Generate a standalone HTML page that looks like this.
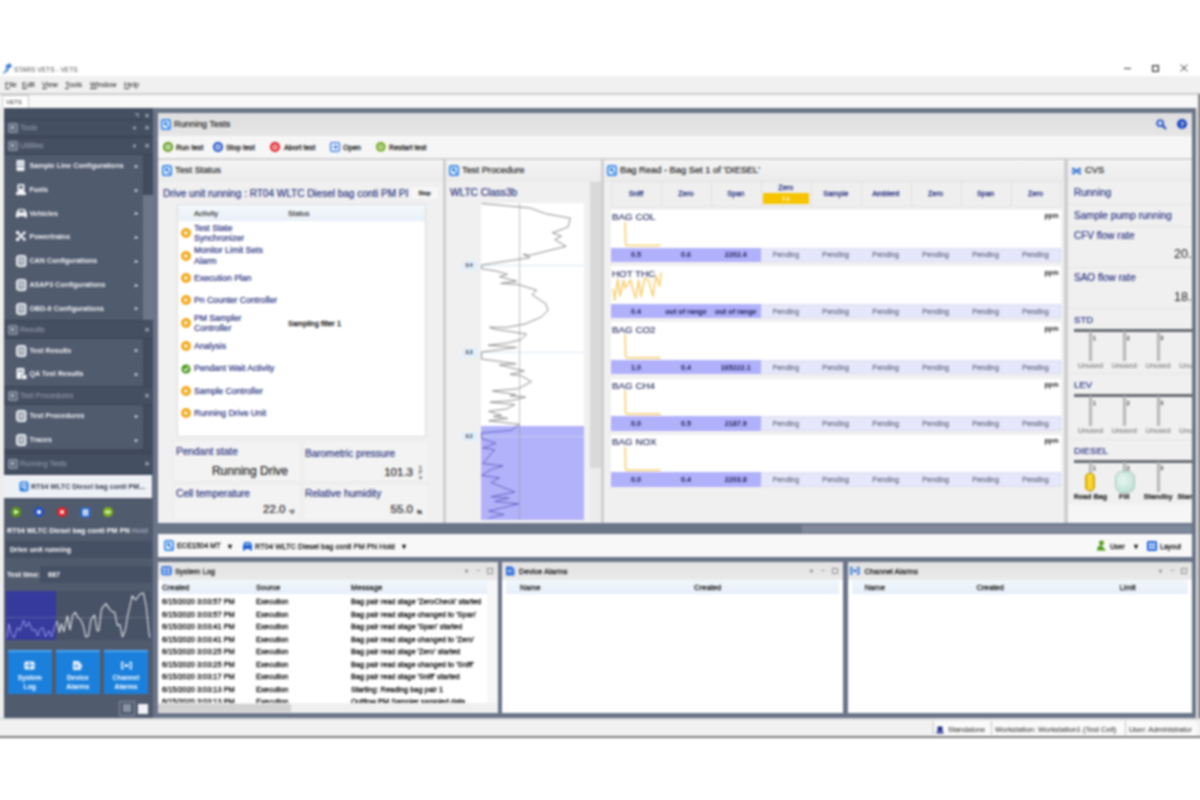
<!DOCTYPE html><html><head><meta charset="utf-8"><title>STARS VETS - VETS</title><style>
html,body{margin:0;padding:0;background:#fff;}
body{width:1200px;height:800px;overflow:hidden;position:relative;font-family:"Liberation Sans",sans-serif;}
#app{position:absolute;left:-20px;top:0;width:1240px;height:800px;filter:blur(0.8px);}
#in{left:20px;top:0;width:1200px;height:800px;}
#app div{position:absolute;box-sizing:border-box;}
.t{white-space:nowrap;}
svg{position:absolute;overflow:visible;}
</style></head><body><div id="app"><div id="in">
<svg style="left:2px;top:62px" width="11" height="13" viewBox="0 0 11 13"><path d="M1 12 L5 6 L3 4 L8 1 L10 5 L7 6 L6 9 Z" fill="#3a7bd0"/><path d="M1 12 L5 6" stroke="#88b4ea" stroke-width="1.5"/></svg>
<div class="t" style="font-size:6.6px;line-height:7.92px;color:#555;top:65.84px;left:14px;">STARS VETS - VETS</div>
<div class="" style="left:1124px;top:68px;width:7px;height:1.2px;background:#333;"></div>
<svg style="left:1151.5px;top:64.5px" width="7" height="7"><rect x="0.6" y="0.6" width="5.8" height="5.8" fill="none" stroke="#333" stroke-width="1.2"/></svg>
<svg style="left:1180px;top:64px" width="8" height="8"><path d="M0.5 0.5 L7.5 7.5 M7.5 0.5 L0.5 7.5" stroke="#333" stroke-width="1"/></svg>
<div class="" style="left:-20px;top:76px;width:1240px;height:18px;background:#f0f0f0;"></div>
<div class="t" style="font-size:7.4px;line-height:8.88px;color:#333;top:80.86px;-webkit-text-stroke:0.1px currentColor;left:5px;"><u>F</u>ile</div>
<div class="t" style="font-size:7.4px;line-height:8.88px;color:#333;top:80.86px;-webkit-text-stroke:0.1px currentColor;left:22px;"><u>E</u>dit</div>
<div class="t" style="font-size:7.4px;line-height:8.88px;color:#333;top:80.86px;-webkit-text-stroke:0.1px currentColor;left:42px;"><u>V</u>iew</div>
<div class="t" style="font-size:7.4px;line-height:8.88px;color:#333;top:80.86px;-webkit-text-stroke:0.1px currentColor;left:65px;"><u>T</u>ools</div>
<div class="t" style="font-size:7.4px;line-height:8.88px;color:#333;top:80.86px;-webkit-text-stroke:0.1px currentColor;left:90px;"><u>W</u>indow</div>
<div class="t" style="font-size:7.4px;line-height:8.88px;color:#333;top:80.86px;-webkit-text-stroke:0.1px currentColor;left:124px;"><u>H</u>elp</div>
<div class="" style="left:-20px;top:93px;width:1240px;height:2px;background:#cfcfcf;"></div>
<div class="" style="left:-20px;top:95px;width:1240px;height:13px;background:#f8f8f8;"></div>
<div class="" style="left:2px;top:95px;width:27px;height:13px;background:#fff;border:1px solid #c8c8c8;border-bottom:none;"></div>
<div class="t" style="font-size:6px;line-height:7.20px;color:#333;top:98.70px;left:6px;">VETS</div>
<div class="" style="left:-20px;top:108px;width:24px;height:630px;background:#ededed;"></div>
<div class="" style="left:1195.5px;top:108px;width:2.5px;height:630px;background:#e8e8e8;"></div>
<div class="" style="left:4px;top:108px;width:149px;height:610px;background:#515b6e;"></div>
<div class="" style="left:153px;top:108px;width:1042.5px;height:610px;background:#6b7588;"></div>
<div class="" style="left:1198px;top:94px;width:22px;height:627px;background:#8c8c8c;"></div>
<div class="" style="left:4px;top:108px;width:149px;height:11px;background:#454f62;"></div>
<div class="t" style="font-size:7px;line-height:8.40px;color:#b8c0cc;top:111.60px;-webkit-text-stroke:0.3px currentColor;left:47px;width:200px;text-align:center;">&#215;</div>
<svg style="left:134px;top:112px" width="6" height="6"><path d="M1 1 L5 5 M3 1 L5 3" stroke="#b8c0cc" stroke-width="1"/></svg>
<div class="" style="left:4px;top:119px;width:149px;height:18px;background:#454f62;border-top:1px solid #3b4456;border-bottom:1px solid #3b4456;"></div>
<svg style="left:8px;top:123.0px" width="10" height="10"><rect x="0.7" y="0.7" width="8.6" height="8.6" rx="1" fill="#646e80" stroke="#8e97a6" stroke-width="1.3"/><rect x="3" y="3" width="3" height="3" fill="#a7afbc"/></svg>
<div class="t" style="font-size:7.4px;line-height:8.88px;color:#7f8999;top:124.36px;-webkit-text-stroke:0.3px currentColor;left:20px;">Tools</div>
<div class="t" style="font-size:6px;line-height:7.20px;color:#aab2bf;top:125.20px;-webkit-text-stroke:0.3px currentColor;left:34.5px;width:200px;text-align:center;">&#9662;</div>
<div class="t" style="font-size:8px;line-height:9.60px;color:#b8c0cc;top:123.20px;-webkit-text-stroke:0.3px currentColor;left:47px;width:200px;text-align:center;">&#215;</div>
<div class="" style="left:4px;top:137px;width:149px;height:18px;background:#454f62;border-top:1px solid #3b4456;border-bottom:1px solid #3b4456;"></div>
<svg style="left:8px;top:141.0px" width="10" height="10"><rect x="0.7" y="0.7" width="8.6" height="8.6" rx="1" fill="#646e80" stroke="#8e97a6" stroke-width="1.3"/><rect x="3" y="3" width="3" height="3" fill="#a7afbc"/></svg>
<div class="t" style="font-size:7.4px;line-height:8.88px;color:#7f8999;top:142.36px;-webkit-text-stroke:0.3px currentColor;left:20px;">Utilities</div>
<div class="t" style="font-size:6px;line-height:7.20px;color:#aab2bf;top:143.20px;-webkit-text-stroke:0.3px currentColor;left:34.5px;width:200px;text-align:center;">&#9662;</div>
<div class="t" style="font-size:8px;line-height:9.60px;color:#b8c0cc;top:141.20px;-webkit-text-stroke:0.3px currentColor;left:47px;width:200px;text-align:center;">&#215;</div>
<div class="" style="left:143px;top:155px;width:10px;height:298px;background:#414b5d;"></div>
<div class="" style="left:143px;top:195px;width:10px;height:142px;background:#6d7789;"></div>
<svg style="left:16px;top:160.2px" width="12" height="12"><rect x="0.5" y="0" width="8" height="11" rx="1" fill="#f2f4f7"/><rect x="0.5" y="5.8" width="8" height="1.2" fill="#8e98a8"/><rect x="2" y="1.8" width="5" height="2.4" fill="#c9ced7"/></svg>
<div class="t" style="font-size:7.1px;line-height:8.52px;color:#f0f2f5;top:162.24px;font-weight:bold;left:29.5px;">Sample Line Configurations</div>
<div class="t" style="font-size:6px;line-height:7.20px;color:#cfd5de;top:162.90px;-webkit-text-stroke:0.3px currentColor;left:36px;width:200px;text-align:center;">&#9656;</div>
<svg style="left:16px;top:183.8px" width="12" height="12"><rect x="1.5" y="0" width="7" height="8" rx="1.2" fill="#f2f4f7"/><rect x="3.3" y="1.6" width="3.4" height="3" fill="#515b6e"/><rect x="0" y="8" width="10" height="3" rx="0.8" fill="#f2f4f7"/></svg>
<div class="t" style="font-size:7.1px;line-height:8.52px;color:#f0f2f5;top:185.84px;font-weight:bold;left:29.5px;">Fuels</div>
<div class="t" style="font-size:6px;line-height:7.20px;color:#cfd5de;top:186.50px;-webkit-text-stroke:0.3px currentColor;left:36px;width:200px;text-align:center;">&#9656;</div>
<svg style="left:16px;top:207.5px" width="12" height="12"><path d="M2.2 1 h6.6 l1.7 3.6 q0.5.2 0.5.9 v4 h-2.4 v-1.3 h-6.2 v1.3 h-2.4 v-4 q0 -0.7.5 -0.9 z" fill="#f2f4f7"/><rect x="3" y="2.3" width="5" height="2" fill="#515b6e"/></svg>
<div class="t" style="font-size:7.1px;line-height:8.52px;color:#f0f2f5;top:209.54px;font-weight:bold;left:29.5px;">Vehicles</div>
<div class="t" style="font-size:6px;line-height:7.20px;color:#cfd5de;top:210.20px;-webkit-text-stroke:0.3px currentColor;left:36px;width:200px;text-align:center;">&#9656;</div>
<svg style="left:16px;top:231.3px" width="12" height="12"><path d="M1.5 1.5 L8.5 8.5 M8.5 1.5 L1.5 8.5" stroke="#f2f4f7" stroke-width="1.8"/><rect x="0" y="0" width="3.2" height="3.2" fill="#f2f4f7"/><rect x="0" y="6.8" width="3.2" height="3.2" fill="#f2f4f7"/><rect x="7" y="0.5" width="2.6" height="2.6" fill="#f2f4f7"/><rect x="7" y="7" width="2.6" height="2.6" fill="#f2f4f7"/></svg>
<div class="t" style="font-size:7.1px;line-height:8.52px;color:#f0f2f5;top:233.34px;font-weight:bold;left:29.5px;">Powertrains</div>
<div class="t" style="font-size:6px;line-height:7.20px;color:#cfd5de;top:234.00px;-webkit-text-stroke:0.3px currentColor;left:36px;width:200px;text-align:center;">&#9656;</div>
<svg style="left:16px;top:255.0px" width="12" height="12"><rect x="0.9" y="0.9" width="8.7" height="10.2" rx="2.2" fill="#98a1af" stroke="#f2f4f7" stroke-width="1.8"/><path d="M3 4.5 h4.5 M3 7 h4.5" stroke="#e4e7ec" stroke-width="1"/></svg>
<div class="t" style="font-size:7.1px;line-height:8.52px;color:#f0f2f5;top:257.04px;font-weight:bold;left:29.5px;">CAN Configurations</div>
<div class="t" style="font-size:6px;line-height:7.20px;color:#cfd5de;top:257.70px;-webkit-text-stroke:0.3px currentColor;left:36px;width:200px;text-align:center;">&#9656;</div>
<svg style="left:16px;top:278.8px" width="12" height="12"><rect x="0.9" y="0.9" width="8.7" height="10.2" rx="2.2" fill="#98a1af" stroke="#f2f4f7" stroke-width="1.8"/><path d="M3 4.5 h4.5 M3 7 h4.5" stroke="#e4e7ec" stroke-width="1"/></svg>
<div class="t" style="font-size:7.1px;line-height:8.52px;color:#f0f2f5;top:280.84px;font-weight:bold;left:29.5px;">ASAP3 Configurations</div>
<div class="t" style="font-size:6px;line-height:7.20px;color:#cfd5de;top:281.50px;-webkit-text-stroke:0.3px currentColor;left:36px;width:200px;text-align:center;">&#9656;</div>
<svg style="left:16px;top:302.7px" width="12" height="12"><rect x="0.9" y="0.9" width="8.7" height="10.2" rx="2.2" fill="#98a1af" stroke="#f2f4f7" stroke-width="1.8"/><path d="M3 4.5 h4.5 M3 7 h4.5" stroke="#e4e7ec" stroke-width="1"/></svg>
<div class="t" style="font-size:7.1px;line-height:8.52px;color:#f0f2f5;top:304.74px;font-weight:bold;left:29.5px;">OBD-II Configurations</div>
<div class="t" style="font-size:6px;line-height:7.20px;color:#cfd5de;top:305.40px;-webkit-text-stroke:0.3px currentColor;left:36px;width:200px;text-align:center;">&#9656;</div>
<div class="" style="left:4px;top:320px;width:149px;height:19px;background:#454f62;border-top:1px solid #3b4456;border-bottom:1px solid #3b4456;"></div>
<svg style="left:8px;top:324.5px" width="10" height="10"><rect x="0.7" y="0.7" width="8.6" height="8.6" rx="1" fill="#646e80" stroke="#8e97a6" stroke-width="1.3"/><rect x="3" y="3" width="3" height="3" fill="#a7afbc"/></svg>
<div class="t" style="font-size:7.4px;line-height:8.88px;color:#7f8999;top:325.86px;-webkit-text-stroke:0.3px currentColor;left:20px;">Results</div>
<div class="t" style="font-size:8px;line-height:9.60px;color:#b8c0cc;top:324.70px;-webkit-text-stroke:0.3px currentColor;left:47px;width:200px;text-align:center;">&#215;</div>
<svg style="left:16px;top:344.5px" width="12" height="12"><rect x="0.9" y="0.9" width="8.7" height="10.2" rx="2.2" fill="#98a1af" stroke="#f2f4f7" stroke-width="1.8"/><path d="M3 4.5 h4.5 M3 7 h4.5" stroke="#e4e7ec" stroke-width="1"/></svg>
<div class="t" style="font-size:7.1px;line-height:8.52px;color:#f0f2f5;top:346.54px;font-weight:bold;left:29.5px;">Test Results</div>
<div class="t" style="font-size:6px;line-height:7.20px;color:#cfd5de;top:347.20px;-webkit-text-stroke:0.3px currentColor;left:36px;width:200px;text-align:center;">&#9656;</div>
<svg style="left:16px;top:368.2px" width="12" height="12"><rect x="0.5" y="0" width="8" height="11" rx="1" fill="#f2f4f7"/><rect x="2" y="2" width="5" height="2" fill="#98a1af"/><rect x="5.5" y="6.5" width="5.5" height="5" rx="0.8" fill="#f2f4f7" stroke="#515b6e" stroke-width="0.8"/></svg>
<div class="t" style="font-size:7.1px;line-height:8.52px;color:#f0f2f5;top:370.24px;font-weight:bold;left:29.5px;">QA Test Results</div>
<div class="t" style="font-size:6px;line-height:7.20px;color:#cfd5de;top:370.90px;-webkit-text-stroke:0.3px currentColor;left:36px;width:200px;text-align:center;">&#9656;</div>
<div class="" style="left:4px;top:386px;width:149px;height:19px;background:#454f62;border-top:1px solid #3b4456;border-bottom:1px solid #3b4456;"></div>
<svg style="left:8px;top:390.5px" width="10" height="10"><rect x="0.7" y="0.7" width="8.6" height="8.6" rx="1" fill="#646e80" stroke="#8e97a6" stroke-width="1.3"/><rect x="3" y="3" width="3" height="3" fill="#a7afbc"/></svg>
<div class="t" style="font-size:7.4px;line-height:8.88px;color:#7f8999;top:391.86px;-webkit-text-stroke:0.3px currentColor;left:20px;">Test Procedures</div>
<div class="t" style="font-size:8px;line-height:9.60px;color:#b8c0cc;top:390.70px;-webkit-text-stroke:0.3px currentColor;left:47px;width:200px;text-align:center;">&#215;</div>
<svg style="left:16px;top:410.2px" width="12" height="12"><rect x="0.9" y="0.9" width="8.7" height="10.2" rx="2.2" fill="#98a1af" stroke="#f2f4f7" stroke-width="1.8"/><path d="M3 4.5 h4.5 M3 7 h4.5" stroke="#e4e7ec" stroke-width="1"/></svg>
<div class="t" style="font-size:7.1px;line-height:8.52px;color:#f0f2f5;top:412.24px;font-weight:bold;left:29.5px;">Test Procedures</div>
<div class="t" style="font-size:6px;line-height:7.20px;color:#cfd5de;top:412.90px;-webkit-text-stroke:0.3px currentColor;left:36px;width:200px;text-align:center;">&#9656;</div>
<svg style="left:16px;top:434.0px" width="12" height="12"><rect x="0.9" y="0.9" width="8.7" height="10.2" rx="2.2" fill="#98a1af" stroke="#f2f4f7" stroke-width="1.8"/><path d="M3 4.5 h4.5 M3 7 h4.5" stroke="#e4e7ec" stroke-width="1"/></svg>
<div class="t" style="font-size:7.1px;line-height:8.52px;color:#f0f2f5;top:436.04px;font-weight:bold;left:29.5px;">Traces</div>
<div class="t" style="font-size:6px;line-height:7.20px;color:#cfd5de;top:436.70px;-webkit-text-stroke:0.3px currentColor;left:36px;width:200px;text-align:center;">&#9656;</div>
<div class="" style="left:4px;top:449px;width:149px;height:5px;background:#3f495b;"></div>
<div class="" style="left:4px;top:453px;width:149px;height:21px;background:#454f62;border-top:1px solid #3b4456;border-bottom:1px solid #3b4456;"></div>
<svg style="left:8px;top:458.5px" width="10" height="10"><rect x="0.7" y="0.7" width="8.6" height="8.6" rx="1" fill="#646e80" stroke="#8e97a6" stroke-width="1.3"/><rect x="3" y="3" width="3" height="3" fill="#a7afbc"/></svg>
<div class="t" style="font-size:7.4px;line-height:8.88px;color:#7f8999;top:459.86px;-webkit-text-stroke:0.3px currentColor;left:20px;">Running Tests</div>
<div class="t" style="font-size:8px;line-height:9.60px;color:#b8c0cc;top:458.70px;-webkit-text-stroke:0.3px currentColor;left:47px;width:200px;text-align:center;">&#215;</div>
<div class="" style="left:4px;top:475px;width:148px;height:22.5px;background:#edf0f5;"></div>
<svg style="left:19px;top:480.5px" width="10" height="11"><rect x="0.5" y="0.5" width="9" height="10" rx="2" fill="#2f7fe0"/><path d="M3 2.5 h3.5 v3.5 h-3.5 z M5 6.5 l2.5 2" stroke="#fff" stroke-width="1.1" fill="none"/></svg>
<div class="t" style="font-size:7.1px;line-height:8.52px;color:#333c4c;top:482.84px;font-weight:bold;left:31px;">RT04 WLTC Diesel bag conti PM...</div>
<svg style="left:11px;top:507.29999999999995px" width="10" height="10" viewBox="-5 -5 10 10"><circle r="5" fill="#5a9a10"/><path d="M-1.6 -2.6 L2.8 0 L-1.6 2.6 Z" fill="#fff"/></svg>
<svg style="left:34px;top:507.29999999999995px" width="10" height="10" viewBox="-5 -5 10 10"><circle r="5" fill="#1c50c8"/><rect x="-1.8" y="-1.8" width="3.6" height="3.6" fill="#fff"/></svg>
<svg style="left:57px;top:507.29999999999995px" width="10" height="10" viewBox="-5 -5 10 10"><circle r="5" fill="#e01c24"/><path d="M-1.8 -1.8 L1.8 1.8 M1.8 -1.8 L-1.8 1.8" stroke="#fff" stroke-width="1.6"/></svg>
<svg style="left:79.5px;top:506.8px" width="11" height="11"><rect x="0.5" y="0.5" width="10" height="10" rx="2" fill="#2a6fd6"/><rect x="3" y="2.5" width="5" height="6" fill="#fff"/><path d="M5.5 3.5 v4" stroke="#2a6fd6" stroke-width="1.2"/></svg>
<svg style="left:103px;top:507.29999999999995px" width="10" height="10" viewBox="-5 -5 10 10"><circle r="5" fill="#7ab317"/><path d="M-2.6 -2.2 L0.6 0 L-2.6 2.2 Z M0.2 -2.2 L3.2 0 L0.2 2.2 Z" fill="#e6f5c8"/></svg>
<div class="t" style="font-size:7.25px;line-height:8.70px;color:#fff;top:527.45px;font-weight:bold;left:7px;">RT04 WLTC Diesel bag conti PM PN <span style="color:#9aa3b2">Hold</span></div>
<div class="" style="left:6px;top:541px;width:146px;height:16.5px;background:#465064;"></div>
<div class="t" style="font-size:7.1px;line-height:8.52px;color:#fff;top:546.04px;font-weight:bold;left:10px;">Drive unit running</div>
<div class="t" style="font-size:7.1px;line-height:8.52px;color:#fff;top:570.84px;font-weight:bold;left:7px;">Test time:</div>
<div class="" style="left:40px;top:565.5px;width:112px;height:17.5px;background:#465064;"></div>
<div class="t" style="font-size:7.1px;line-height:8.52px;color:#fff;top:570.84px;font-weight:bold;left:48px;">687</div>
<div class="" style="left:6px;top:590.5px;width:144.5px;height:49px;background:#485266;"></div>
<div class="" style="left:6px;top:590.5px;width:50px;height:49px;background:#363a9c;"></div>
<div class="" style="left:6px;top:616.5px;width:144.5px;height:1px;background:rgba(150,160,180,0.35);"></div>
<svg style="left:0;top:0" width="1200" height="800"><polyline points="7.0,637.8 8.8,623.8 11.4,634.3 14.0,637.8 17.5,627.3 20.0,630.8 23.6,620.3 26.3,627.3 28.9,622.0 32.4,630.8 35.0,629.0 37.6,636.0 40.3,629.0 42.9,627.3 45.5,636.9 49.0,630.8 51.6,636.9 55.0,625.5 56.9,621.0" fill="none" stroke="#9a9bec" stroke-width="1.0" stroke-linejoin="round" /><polyline points="56.9,621.0 59.5,632.5 61.3,623.8 63.9,631.6 67.4,615.9 70.0,629.9 72.7,615.0 75.3,612.4 77.9,617.6 80.5,619.4 83.2,625.5 85.8,636.9 88.4,636.0 91.0,619.4 94.5,615.0 97.2,630.8 98.9,630.8 101.5,608.9 105.9,603.6 109.4,608.9 112.0,611.5 114.7,612.4 117.3,625.5 119.9,624.6 122.5,636.9 125.2,630.8 127.8,615.0 132.2,595.8 135.7,600.0 140.0,594.0 143.5,593.0 146.2,606.3 148.8,630.8 149.7,637.8" fill="none" stroke="#eef0f4" stroke-width="1.05" stroke-linejoin="round" /></svg>
<div class="" style="left:8px;top:650px;width:43.5px;height:43.5px;background:#1b80dc;border-top:2px solid #49a4f2;"></div>
<svg style="left:24.25px;top:660.5px" width="11" height="9"><rect x="0.3" y="0.5" width="10.4" height="8" rx="1.5" fill="#eaf3fd"/><path d="M5.5 1.5 v6 M1.5 4.5 h8" stroke="#1b80dc" stroke-width="1.1"/></svg>
<div class="t" style="font-size:6.8px;line-height:8.16px;color:#fff;top:674.32px;font-weight:bold;left:-70.25px;width:200px;text-align:center;">System</div>
<div class="t" style="font-size:6.8px;line-height:8.16px;color:#fff;top:682.92px;font-weight:bold;left:-70.25px;width:200px;text-align:center;">Log</div>
<div class="" style="left:56px;top:650px;width:43.7px;height:43.5px;background:#1b80dc;border-top:2px solid #49a4f2;"></div>
<svg style="left:72.35px;top:660.5px" width="11" height="9"><path d="M1 0 h5.5 l2.5 2.5 v6.5 h-8 z" fill="#eaf3fd"/><path d="M2.5 4 h4 M2.5 6 h4" stroke="#1b80dc" stroke-width="0.9"/><path d="M8 3.2 l3 1.8 l-3 1.8 z" fill="#eaf3fd"/></svg>
<div class="t" style="font-size:6.8px;line-height:8.16px;color:#fff;top:674.32px;font-weight:bold;left:-22.150000000000006px;width:200px;text-align:center;">Device</div>
<div class="t" style="font-size:6.8px;line-height:8.16px;color:#fff;top:682.92px;font-weight:bold;left:-22.150000000000006px;width:200px;text-align:center;">Alarms</div>
<div class="" style="left:104px;top:650px;width:44px;height:43.5px;background:#1b80dc;border-top:2px solid #49a4f2;"></div>
<svg style="left:120.5px;top:660.5px" width="11" height="9"><path d="M2.8 1.5 h-2 v6 h2 M8.2 1.5 h2 v6 h-2" fill="none" stroke="#eaf3fd" stroke-width="1.4"/><rect x="3" y="3.4" width="5" height="2.2" fill="#eaf3fd"/></svg>
<div class="t" style="font-size:6.8px;line-height:8.16px;color:#fff;top:674.32px;font-weight:bold;left:26.0px;width:200px;text-align:center;">Channel</div>
<div class="t" style="font-size:6.8px;line-height:8.16px;color:#fff;top:682.92px;font-weight:bold;left:26.0px;width:200px;text-align:center;">Alarms</div>
<div class="" style="left:119px;top:701px;width:16px;height:15px;border:1px solid #8a93a3;"></div>
<div class="" style="left:122.5px;top:704px;width:8px;height:8px;background:#8a93a3;"></div>
<div class="" style="left:138px;top:703.5px;width:10px;height:10px;background:#f1f3f6;"></div>
<div class="" style="left:158px;top:113px;width:1034px;height:23px;background:linear-gradient(#dedede,#e6e6e6);"></div>
<svg style="left:161.0px;top:119.0px" width="10" height="11"><rect x="0.8" y="0.8" width="8.4" height="9.4" rx="2" fill="#eef5ff" stroke="#3585e6" stroke-width="1.7"/><path d="M3 3 h3.2 v3.2 h-3.2 z" fill="#3585e6"/><path d="M5.5 6 l2.2 2.4" stroke="#3585e6" stroke-width="1.4"/></svg>
<div class="t" style="font-size:8.9px;line-height:10.68px;color:#222;top:119.46px;-webkit-text-stroke:0.2px currentColor;left:174px;">Running Tests</div>
<svg style="left:1156px;top:119px" width="11" height="11"><circle cx="4.2" cy="4.2" r="3" fill="#cfe0fa" stroke="#1c48c0" stroke-width="1.6"/><path d="M6.5 6.5 L10 10" stroke="#1c48c0" stroke-width="2"/></svg>
<svg style="left:1176.5px;top:119.3px" width="10" height="10" viewBox="-5 -5 10 10"><circle r="5" fill="#1c48c0"/><text x="0" y="2.6" font-size="7.5" font-weight="bold" fill="#fff" text-anchor="middle" font-family="Liberation Sans,sans-serif">?</text></svg>
<div class="" style="left:158px;top:136px;width:1034px;height:22.5px;background:#f6f6f6;border-bottom:1px solid #d0d0d0;"></div>
<svg style="left:163px;top:142px" width="10" height="10" viewBox="-5 -5 10 10"><circle r="5" fill="#5a9a10"/><circle r="2.7" fill="#fff"/><path d="M-1.1 -1.8 L1.9 0 L-1.1 1.8 Z" fill="#5a9a10"/></svg>
<div class="t" style="font-size:7.3px;line-height:8.76px;color:#222;top:143.62px;-webkit-text-stroke:0.3px currentColor;left:176px;">Run test</div>
<svg style="left:213px;top:142px" width="10" height="10" viewBox="-5 -5 10 10"><circle r="5" fill="#1c50c8"/><circle r="2.7" fill="#fff"/><rect x="-1.2" y="-1.2" width="2.4" height="2.4" fill="#1c50c8"/></svg>
<div class="t" style="font-size:7.3px;line-height:8.76px;color:#222;top:143.62px;-webkit-text-stroke:0.3px currentColor;left:226px;">Stop test</div>
<svg style="left:270px;top:142px" width="10" height="10" viewBox="-5 -5 10 10"><circle r="5" fill="#e01c24"/><circle r="2.6" fill="#fff"/><path d="M-1.2 -1.2 L1.2 1.2 M1.2 -1.2 L-1.2 1.2" stroke="#e01c24" stroke-width="1.1"/></svg>
<div class="t" style="font-size:7.3px;line-height:8.76px;color:#222;top:143.62px;-webkit-text-stroke:0.3px currentColor;left:284px;">Abort test</div>
<svg style="left:330px;top:142px" width="10" height="10"><rect x="0.6" y="0.6" width="8.8" height="8.8" rx="1.5" fill="#fff" stroke="#2a6fd6" stroke-width="1.2"/><path d="M2 5 h5 M5 3 l2 2 l-2 2" stroke="#2a6fd6" stroke-width="1.1" fill="none"/></svg>
<div class="t" style="font-size:7.3px;line-height:8.76px;color:#222;top:143.62px;-webkit-text-stroke:0.3px currentColor;left:343px;">Open</div>
<svg style="left:375.8px;top:142.2px" width="9.6" height="9.6" viewBox="-4.8 -4.8 9.6 9.6"><circle r="4.8" fill="#6aa512"/><circle r="2" fill="none" stroke="#fff" stroke-width="1.1"/></svg>
<div class="t" style="font-size:7.3px;line-height:8.76px;color:#222;top:143.62px;-webkit-text-stroke:0.3px currentColor;left:389px;">Restart test</div>
<div class="" style="left:158px;top:158.5px;width:1034px;height:364.5px;background:#cfcfcf;"></div>
<div class="" style="left:158px;top:159px;width:285px;height:364px;background:#f0f0f0;"></div>
<div class="" style="left:158px;top:159px;width:285px;height:22.5px;background:linear-gradient(#f4f4f4,#ebebeb);border-top:1px solid #d4d4d4;"></div>
<svg style="left:161.5px;top:165.0px" width="10" height="11"><rect x="0.8" y="0.8" width="8.4" height="9.4" rx="2" fill="#eef5ff" stroke="#3585e6" stroke-width="1.7"/><path d="M3 3 h3.2 v3.2 h-3.2 z" fill="#3585e6"/><path d="M5.5 6 l2.2 2.4" stroke="#3585e6" stroke-width="1.4"/></svg>
<div class="t" style="font-size:9.3px;line-height:11.16px;color:#222;top:165.12px;-webkit-text-stroke:0.2px currentColor;left:175px;">Test Status</div>
<div class="" style="left:446px;top:159px;width:155px;height:364px;background:#f0f0f0;"></div>
<div class="" style="left:446px;top:159px;width:155px;height:22.5px;background:linear-gradient(#f4f4f4,#ebebeb);border-top:1px solid #d4d4d4;"></div>
<svg style="left:449.0px;top:165.0px" width="10" height="11"><rect x="0.8" y="0.8" width="8.4" height="9.4" rx="2" fill="#eef5ff" stroke="#3585e6" stroke-width="1.7"/><path d="M3 3 h3.2 v3.2 h-3.2 z" fill="#3585e6"/><path d="M5.5 6 l2.2 2.4" stroke="#3585e6" stroke-width="1.4"/></svg>
<div class="t" style="font-size:9.3px;line-height:11.16px;color:#222;top:165.12px;-webkit-text-stroke:0.2px currentColor;left:462px;">Test Procedure</div>
<div class="" style="left:604px;top:159px;width:460px;height:364px;background:#f0f0f0;"></div>
<div class="" style="left:604px;top:159px;width:460px;height:22.5px;background:linear-gradient(#f4f4f4,#ebebeb);border-top:1px solid #d4d4d4;"></div>
<svg style="left:606.5px;top:165.0px" width="10" height="11"><rect x="0.8" y="0.8" width="8.4" height="9.4" rx="2" fill="#eef5ff" stroke="#3585e6" stroke-width="1.7"/><path d="M3 3 h3.2 v3.2 h-3.2 z" fill="#3585e6"/><path d="M5.5 6 l2.2 2.4" stroke="#3585e6" stroke-width="1.4"/></svg>
<div class="t" style="font-size:9.3px;line-height:11.16px;color:#222;top:165.12px;-webkit-text-stroke:0.2px currentColor;left:620px;">Bag Read - Bag Set 1 of 'DIESEL'</div>
<div class="" style="left:1067.5px;top:159px;width:124.5px;height:364px;background:#f0f0f0;"></div>
<div class="" style="left:1067.5px;top:159px;width:124.5px;height:22.5px;background:linear-gradient(#f4f4f4,#ebebeb);border-top:1px solid #d4d4d4;"></div>
<svg style="left:1072px;top:166.5px" width="9" height="8"><path d="M0.5 1 L8.5 7 M0.5 7 L8.5 1" stroke="#2f74da" stroke-width="1.9"/><path d="M0.6 1.5 v5 M8.4 1.5 v5" stroke="#2f74da" stroke-width="0.8"/></svg>
<div class="t" style="font-size:9.3px;line-height:11.16px;color:#222;top:165.12px;-webkit-text-stroke:0.2px currentColor;left:1085px;">CVS</div>
<div class="t" style="font-size:10px;line-height:12.00px;color:#2b3380;top:188.20px;-webkit-text-stroke:0.2px currentColor;left:163px;width:246px;overflow:hidden;">Drive unit running : RT04 WLTC Diesel bag conti PM PI</div>
<div class="" style="left:410px;top:186px;width:29px;height:14px;background:#f7f7f7;border:1px solid #ededed;"></div>
<div class="t" style="font-size:6px;line-height:7.20px;color:#222;top:190.20px;-webkit-text-stroke:0.3px currentColor;left:324.5px;width:200px;text-align:center;">Stop</div>
<div class="" style="left:177px;top:204px;width:249px;height:233px;background:#fff;border:1px solid #dcdcdc;"></div>
<div class="" style="left:178px;top:205px;width:247px;height:15.5px;background:linear-gradient(#f4f8fc,#e8f0f8);"></div>
<div class="t" style="font-size:7.6px;line-height:9.12px;color:#222;top:209.04px;-webkit-text-stroke:0.1px currentColor;left:194px;">Activity</div>
<div class="t" style="font-size:7.6px;line-height:9.12px;color:#222;top:209.04px;-webkit-text-stroke:0.1px currentColor;left:288px;">Status</div>
<svg style="left:180.6px;top:228px" width="10" height="10" viewBox="-5 -5 10 10"><circle r="5" fill="#f2aa1c"/><path d="M-1.5 -2.3 L2.5 0 L-1.5 2.3 Z" fill="#fff"/></svg>
<div class="t" style="font-size:8.6px;line-height:10.32px;color:#2b3380;top:222.64px;-webkit-text-stroke:0.2px currentColor;left:194px;">Test State</div>
<div class="t" style="font-size:8.6px;line-height:10.32px;color:#2b3380;top:233.04px;-webkit-text-stroke:0.2px currentColor;left:194px;">Synchronizer</div>
<svg style="left:180.6px;top:250.5px" width="10" height="10" viewBox="-5 -5 10 10"><circle r="5" fill="#f2aa1c"/><path d="M-1.5 -2.3 L2.5 0 L-1.5 2.3 Z" fill="#fff"/></svg>
<div class="t" style="font-size:8.6px;line-height:10.32px;color:#2b3380;top:245.14px;-webkit-text-stroke:0.2px currentColor;left:194px;">Monitor Limit Sets</div>
<div class="t" style="font-size:8.6px;line-height:10.32px;color:#2b3380;top:255.54px;-webkit-text-stroke:0.2px currentColor;left:194px;">Alarm</div>
<svg style="left:180.6px;top:272.7px" width="10" height="10" viewBox="-5 -5 10 10"><circle r="5" fill="#f2aa1c"/><path d="M-1.5 -2.3 L2.5 0 L-1.5 2.3 Z" fill="#fff"/></svg>
<div class="t" style="font-size:8.6px;line-height:10.32px;color:#2b3380;top:272.54px;-webkit-text-stroke:0.2px currentColor;left:194px;">Execution Plan</div>
<svg style="left:180.6px;top:295px" width="10" height="10" viewBox="-5 -5 10 10"><circle r="5" fill="#f2aa1c"/><path d="M-1.5 -2.3 L2.5 0 L-1.5 2.3 Z" fill="#fff"/></svg>
<div class="t" style="font-size:8.6px;line-height:10.32px;color:#2b3380;top:294.84px;-webkit-text-stroke:0.2px currentColor;left:194px;">Pn Counter Controller</div>
<svg style="left:180.6px;top:318.3px" width="10" height="10" viewBox="-5 -5 10 10"><circle r="5" fill="#f2aa1c"/><path d="M-1.5 -2.3 L2.5 0 L-1.5 2.3 Z" fill="#fff"/></svg>
<div class="t" style="font-size:8.6px;line-height:10.32px;color:#2b3380;top:312.94px;-webkit-text-stroke:0.2px currentColor;left:194px;">PM Sampler</div>
<div class="t" style="font-size:8.6px;line-height:10.32px;color:#2b3380;top:323.34px;-webkit-text-stroke:0.2px currentColor;left:194px;">Controller</div>
<div class="t" style="font-size:7.4px;line-height:8.88px;color:#222;top:319.66px;-webkit-text-stroke:0.3px currentColor;left:288px;">Sampling filter 1</div>
<svg style="left:180.6px;top:341.3px" width="10" height="10" viewBox="-5 -5 10 10"><circle r="5" fill="#f2aa1c"/><path d="M-1.5 -2.3 L2.5 0 L-1.5 2.3 Z" fill="#fff"/></svg>
<div class="t" style="font-size:8.6px;line-height:10.32px;color:#2b3380;top:341.14px;-webkit-text-stroke:0.2px currentColor;left:194px;">Analysis</div>
<svg style="left:180.6px;top:363.6px" width="10" height="10" viewBox="-5 -5 10 10"><circle r="4.6" fill="#4a9a18"/><path d="M-2.2 0 L-0.6 1.8 L2.4 -1.8" stroke="#fff" stroke-width="1.4" fill="none"/></svg>
<div class="t" style="font-size:8.6px;line-height:10.32px;color:#2b3380;top:363.44px;-webkit-text-stroke:0.2px currentColor;left:194px;">Pendant Wait Activity</div>
<svg style="left:180.6px;top:386px" width="10" height="10" viewBox="-5 -5 10 10"><circle r="5" fill="#f2aa1c"/><path d="M-1.5 -2.3 L2.5 0 L-1.5 2.3 Z" fill="#fff"/></svg>
<div class="t" style="font-size:8.6px;line-height:10.32px;color:#2b3380;top:385.84px;-webkit-text-stroke:0.2px currentColor;left:194px;">Sample Controller</div>
<svg style="left:180.6px;top:408.2px" width="10" height="10" viewBox="-5 -5 10 10"><circle r="5" fill="#f2aa1c"/><path d="M-1.5 -2.3 L2.5 0 L-1.5 2.3 Z" fill="#fff"/></svg>
<div class="t" style="font-size:8.6px;line-height:10.32px;color:#2b3380;top:408.04px;-webkit-text-stroke:0.2px currentColor;left:194px;">Running Drive Unit</div>
<div class="" style="left:173px;top:440px;width:128px;height:42px;background:#f3f3f3;border:1px solid #ebebeb;"></div>
<div class="" style="left:303px;top:440px;width:126px;height:42px;background:#f3f3f3;border:1px solid #ebebeb;"></div>
<div class="" style="left:173px;top:484px;width:128px;height:37px;background:#f3f3f3;border:1px solid #ebebeb;"></div>
<div class="" style="left:303px;top:484px;width:126px;height:37px;background:#f3f3f3;border:1px solid #ebebeb;"></div>
<div class="t" style="font-size:10px;line-height:12.00px;color:#2b3380;top:446.30px;-webkit-text-stroke:0.2px currentColor;left:176px;">Pendant state</div>
<div class="t" style="font-size:12px;line-height:14.40px;color:#222;top:463.60px;-webkit-text-stroke:0.2px currentColor;right:912px;">Running Drive</div>
<div class="t" style="font-size:10px;line-height:12.00px;color:#2b3380;top:447.70px;-webkit-text-stroke:0.2px currentColor;left:305px;">Barometric pressure</div>
<div class="t" style="font-size:11.5px;line-height:13.80px;color:#222;top:465.70px;-webkit-text-stroke:0.2px currentColor;right:787px;">101.3</div>
<div class="t" style="left:417.5px;top:465px;font-size:5px;line-height:5px;color:#222;text-align:center;width:6px;white-space:normal">k<br>P<br>a</div>
<div class="t" style="font-size:10px;line-height:12.00px;color:#2b3380;top:488.20px;-webkit-text-stroke:0.2px currentColor;left:176px;">Cell temperature</div>
<div class="t" style="font-size:11.5px;line-height:13.80px;color:#222;top:503.30px;-webkit-text-stroke:0.2px currentColor;right:914.5px;">22.0</div>
<div class="t" style="font-size:5.5px;line-height:6.60px;color:#333;top:508.50px;-webkit-text-stroke:0.3px currentColor;left:289px;">&#176;F</div>
<div class="t" style="font-size:10px;line-height:12.00px;color:#2b3380;top:488.20px;-webkit-text-stroke:0.2px currentColor;left:305px;">Relative humidity</div>
<div class="t" style="font-size:11.5px;line-height:13.80px;color:#222;top:503.30px;-webkit-text-stroke:0.2px currentColor;right:787px;">55.0</div>
<div class="t" style="font-size:5.5px;line-height:6.60px;color:#333;top:508.50px;-webkit-text-stroke:0.3px currentColor;left:417px;">%</div>
<div class="t" style="font-size:10.1px;line-height:12.12px;color:#2b3380;top:187.24px;-webkit-text-stroke:0.2px currentColor;left:450px;">WLTC Class3b</div>
<div class="" style="left:590px;top:182px;width:10.5px;height:339.5px;background:#ececec;"></div>
<div class="" style="left:590px;top:182px;width:10.5px;height:286px;background:#d9d9d9;"></div>
<div class="" style="left:480.5px;top:203px;width:103.5px;height:317px;background:#fff;"></div>
<div class="" style="left:480.5px;top:426px;width:103.5px;height:94px;background:#b2b2fa;"></div>
<div class="" style="left:518.5px;top:203px;width:1px;height:317px;background:rgba(140,140,150,0.55);"></div>
<div class="" style="left:480.5px;top:265px;width:103.5px;height:1px;background:rgba(200,220,236,0.7);"></div>
<div class="" style="left:461.5px;top:260.5px;width:15px;height:9.5px;background:#e0effa;border-radius:1.5px;"></div>
<div class="" style="left:480.5px;top:352.3px;width:103.5px;height:1px;background:rgba(200,220,236,0.7);"></div>
<div class="" style="left:461.5px;top:347.8px;width:15px;height:9.5px;background:#e0effa;border-radius:1.5px;"></div>
<div class="" style="left:480.5px;top:436px;width:103.5px;height:1px;background:rgba(200,220,236,0.7);"></div>
<div class="" style="left:461.5px;top:431.5px;width:15px;height:9.5px;background:#e0effa;border-radius:1.5px;"></div>
<div class="t" style="font-size:4.8px;line-height:5.76px;color:#223;top:262.72px;font-weight:bold;left:369px;width:200px;text-align:center;">0.4</div>
<div class="t" style="font-size:4.8px;line-height:5.76px;color:#223;top:350.22px;font-weight:bold;left:369px;width:200px;text-align:center;">0.3</div>
<div class="t" style="font-size:4.8px;line-height:5.76px;color:#223;top:433.72px;font-weight:bold;left:369px;width:200px;text-align:center;">0.2</div>
<svg style="left:0;top:0" width="1200" height="800"><polyline points="481.6,203.6 507.5,205.9 530.0,208.0 545.7,213.7 570.4,218.2 568.0,227.0 552.4,232.8 561.4,236.2 554.7,239.6 566.0,246.3 548.0,250.8 530.0,255.3 523.0,254.2 530.0,257.6 507.5,261.0 481.6,265.0 481.6,268.8 496.0,271.0 507.5,274.4 499.6,276.7 516.5,281.2 500.7,283.4 518.7,284.6 536.7,290.2 532.0,294.7 545.7,303.7 548.0,310.4 541.0,317.2 525.4,323.9 507.5,327.3 489.5,327.3 496.0,329.5 526.6,334.0 521.0,339.6 507.5,343.0 488.0,345.3 516.5,347.5 481.6,352.0 481.6,359.0 516.0,363.8 499.4,365.0 524.3,370.9 510.0,374.4 520.8,375.6 531.4,381.6 518.4,388.7 492.3,391.0 516.0,394.6 510.0,395.8 525.5,397.0 511.3,400.6 490.0,402.2 514.8,404.6 506.5,408.9 488.7,411.3 501.8,415.5 493.4,416.5 507.7,418.4 488.7,420.8 519.6,424.3 517.0,426.0" fill="none" stroke="#808080" stroke-width="0.9" stroke-linejoin="round" /><polyline points="517.0,426.0 511.3,430.3 481.6,433.0 481.6,438.6 495.8,443.3 482.8,448.0 494.6,449.7 482.8,463.5 503.0,465.9 491.0,469.5 481.6,475.4 499.4,477.8 491.0,482.5 514.8,492.0 491.0,496.8 508.9,498.0 494.6,501.5 518.4,503.9 488.7,511.0 504.0,514.6 488.7,518.0" fill="none" stroke="#5a5ab8" stroke-width="0.9" stroke-linejoin="round" /></svg>
<div class="" style="left:611px;top:181px;width:449.5px;height:25.5px;background:#efefef;border:1px solid #e2e2e2;"></div>
<div class="t" style="font-size:7.4px;line-height:8.88px;color:#2b3380;top:189.96px;-webkit-text-stroke:0.3px currentColor;left:535.9722222222222px;width:200px;text-align:center;">Sniff</div>
<div class="" style="left:660.9444444444445px;top:182px;width:1px;height:23.5px;background:#e0e0e0;"></div>
<div class="t" style="font-size:7.4px;line-height:8.88px;color:#2b3380;top:189.96px;-webkit-text-stroke:0.3px currentColor;left:585.9166666666666px;width:200px;text-align:center;">Zero</div>
<div class="" style="left:710.8888888888889px;top:182px;width:1px;height:23.5px;background:#e0e0e0;"></div>
<div class="t" style="font-size:7.4px;line-height:8.88px;color:#2b3380;top:189.96px;-webkit-text-stroke:0.3px currentColor;left:635.8611111111111px;width:200px;text-align:center;">Span</div>
<div class="" style="left:760.8333333333333px;top:182px;width:1px;height:23.5px;background:#e0e0e0;"></div>
<div class="t" style="font-size:7.4px;line-height:8.88px;color:#2b3380;top:183.66px;-webkit-text-stroke:0.3px currentColor;left:685.8055555555555px;width:200px;text-align:center;">Zero</div>
<div class="" style="left:762.5px;top:193px;width:46px;height:11px;background:#f6c500;"></div>
<div class="t" style="font-size:5.5px;line-height:6.60px;color:#fff;top:196.10px;font-weight:bold;left:685.8055555555555px;width:200px;text-align:center;">7.4</div>
<div class="" style="left:810.7777777777778px;top:182px;width:1px;height:23.5px;background:#e0e0e0;"></div>
<div class="t" style="font-size:7.4px;line-height:8.88px;color:#2b3380;top:189.96px;-webkit-text-stroke:0.3px currentColor;left:735.75px;width:200px;text-align:center;">Sample</div>
<div class="" style="left:860.7222222222222px;top:182px;width:1px;height:23.5px;background:#e0e0e0;"></div>
<div class="t" style="font-size:7.4px;line-height:8.88px;color:#2b3380;top:189.96px;-webkit-text-stroke:0.3px currentColor;left:785.6944444444445px;width:200px;text-align:center;">Ambient</div>
<div class="" style="left:910.6666666666666px;top:182px;width:1px;height:23.5px;background:#e0e0e0;"></div>
<div class="t" style="font-size:7.4px;line-height:8.88px;color:#2b3380;top:189.96px;-webkit-text-stroke:0.3px currentColor;left:835.6388888888889px;width:200px;text-align:center;">Zero</div>
<div class="" style="left:960.6111111111111px;top:182px;width:1px;height:23.5px;background:#e0e0e0;"></div>
<div class="t" style="font-size:7.4px;line-height:8.88px;color:#2b3380;top:189.96px;-webkit-text-stroke:0.3px currentColor;left:885.5833333333333px;width:200px;text-align:center;">Span</div>
<div class="" style="left:1010.5555555555555px;top:182px;width:1px;height:23.5px;background:#e0e0e0;"></div>
<div class="t" style="font-size:7.4px;line-height:8.88px;color:#2b3380;top:189.96px;-webkit-text-stroke:0.3px currentColor;left:935.5277777777778px;width:200px;text-align:center;">Zero</div>
<div class="" style="left:611px;top:210.0px;width:449.5px;height:37.5px;background:#fff;"></div>
<div class="" style="left:611px;top:247.5px;width:449.5px;height:14.6px;background:#e6e7fb;border:1px solid #dcdcf0;"></div>
<div class="" style="left:611px;top:247.5px;width:150px;height:14.6px;background:#b0b0fb;"></div>
<div class="t" style="font-size:9.8px;line-height:11.76px;color:#343a66;top:211.42px;-webkit-text-stroke:0.2px currentColor;left:612px;">BAG COL</div>
<div class="t" style="font-size:6.6px;line-height:7.92px;color:#222;top:212.44px;font-weight:bold;right:141.5px;">ppm</div>
<div class="t" style="font-size:7.2px;line-height:8.64px;color:#1c1c50;top:251.48px;font-weight:bold;left:535.9722222222222px;width:200px;text-align:center;">0.5</div>
<div class="t" style="font-size:7.2px;line-height:8.64px;color:#1c1c50;top:251.48px;font-weight:bold;left:585.9166666666666px;width:200px;text-align:center;">0.6</div>
<div class="t" style="font-size:7.2px;line-height:8.64px;color:#1c1c50;top:251.48px;font-weight:bold;left:635.8611111111111px;width:200px;text-align:center;">2202.4</div>
<div class="t" style="font-size:7.3px;line-height:8.76px;color:#7c8098;top:251.42px;-webkit-text-stroke:0.3px currentColor;left:685.8055555555555px;width:200px;text-align:center;">Pending</div>
<div class="t" style="font-size:7.3px;line-height:8.76px;color:#7c8098;top:251.42px;-webkit-text-stroke:0.3px currentColor;left:735.75px;width:200px;text-align:center;">Pending</div>
<div class="t" style="font-size:7.3px;line-height:8.76px;color:#7c8098;top:251.42px;-webkit-text-stroke:0.3px currentColor;left:785.6944444444445px;width:200px;text-align:center;">Pending</div>
<div class="t" style="font-size:7.3px;line-height:8.76px;color:#7c8098;top:251.42px;-webkit-text-stroke:0.3px currentColor;left:835.6388888888889px;width:200px;text-align:center;">Pending</div>
<div class="t" style="font-size:7.3px;line-height:8.76px;color:#7c8098;top:251.42px;-webkit-text-stroke:0.3px currentColor;left:885.5833333333333px;width:200px;text-align:center;">Pending</div>
<div class="t" style="font-size:7.3px;line-height:8.76px;color:#7c8098;top:251.42px;-webkit-text-stroke:0.3px currentColor;left:935.5277777777778px;width:200px;text-align:center;">Pending</div>
<div class="" style="left:611px;top:266.2px;width:449.5px;height:37.5px;background:#fff;"></div>
<div class="" style="left:611px;top:303.7px;width:449.5px;height:14.6px;background:#e6e7fb;border:1px solid #dcdcf0;"></div>
<div class="" style="left:611px;top:303.7px;width:150px;height:14.6px;background:#b0b0fb;"></div>
<div class="t" style="font-size:9.8px;line-height:11.76px;color:#343a66;top:267.62px;-webkit-text-stroke:0.2px currentColor;left:612px;">HOT THC</div>
<div class="t" style="font-size:6.6px;line-height:7.92px;color:#222;top:268.64px;font-weight:bold;right:141.5px;">ppm</div>
<div class="t" style="font-size:7.2px;line-height:8.64px;color:#1c1c50;top:307.68px;font-weight:bold;left:535.9722222222222px;width:200px;text-align:center;">0.4</div>
<div class="t" style="font-size:7.2px;line-height:8.64px;color:#1c1c50;top:307.68px;font-weight:bold;left:585.9166666666666px;width:200px;text-align:center;">out of range</div>
<div class="t" style="font-size:7.2px;line-height:8.64px;color:#1c1c50;top:307.68px;font-weight:bold;left:635.8611111111111px;width:200px;text-align:center;">out of range</div>
<div class="t" style="font-size:7.3px;line-height:8.76px;color:#7c8098;top:307.62px;-webkit-text-stroke:0.3px currentColor;left:685.8055555555555px;width:200px;text-align:center;">Pending</div>
<div class="t" style="font-size:7.3px;line-height:8.76px;color:#7c8098;top:307.62px;-webkit-text-stroke:0.3px currentColor;left:735.75px;width:200px;text-align:center;">Pending</div>
<div class="t" style="font-size:7.3px;line-height:8.76px;color:#7c8098;top:307.62px;-webkit-text-stroke:0.3px currentColor;left:785.6944444444445px;width:200px;text-align:center;">Pending</div>
<div class="t" style="font-size:7.3px;line-height:8.76px;color:#7c8098;top:307.62px;-webkit-text-stroke:0.3px currentColor;left:835.6388888888889px;width:200px;text-align:center;">Pending</div>
<div class="t" style="font-size:7.3px;line-height:8.76px;color:#7c8098;top:307.62px;-webkit-text-stroke:0.3px currentColor;left:885.5833333333333px;width:200px;text-align:center;">Pending</div>
<div class="t" style="font-size:7.3px;line-height:8.76px;color:#7c8098;top:307.62px;-webkit-text-stroke:0.3px currentColor;left:935.5277777777778px;width:200px;text-align:center;">Pending</div>
<div class="" style="left:611px;top:322.4px;width:449.5px;height:37.5px;background:#fff;"></div>
<div class="" style="left:611px;top:359.9px;width:449.5px;height:14.6px;background:#e6e7fb;border:1px solid #dcdcf0;"></div>
<div class="" style="left:611px;top:359.9px;width:150px;height:14.6px;background:#b0b0fb;"></div>
<div class="t" style="font-size:9.8px;line-height:11.76px;color:#343a66;top:323.82px;-webkit-text-stroke:0.2px currentColor;left:612px;">BAG CO2</div>
<div class="t" style="font-size:6.6px;line-height:7.92px;color:#222;top:324.84px;font-weight:bold;right:141.5px;">ppm</div>
<div class="t" style="font-size:7.2px;line-height:8.64px;color:#1c1c50;top:363.88px;font-weight:bold;left:535.9722222222222px;width:200px;text-align:center;">1.0</div>
<div class="t" style="font-size:7.2px;line-height:8.64px;color:#1c1c50;top:363.88px;font-weight:bold;left:585.9166666666666px;width:200px;text-align:center;">0.4</div>
<div class="t" style="font-size:7.2px;line-height:8.64px;color:#1c1c50;top:363.88px;font-weight:bold;left:635.8611111111111px;width:200px;text-align:center;">165222.1</div>
<div class="t" style="font-size:7.3px;line-height:8.76px;color:#7c8098;top:363.82px;-webkit-text-stroke:0.3px currentColor;left:685.8055555555555px;width:200px;text-align:center;">Pending</div>
<div class="t" style="font-size:7.3px;line-height:8.76px;color:#7c8098;top:363.82px;-webkit-text-stroke:0.3px currentColor;left:735.75px;width:200px;text-align:center;">Pending</div>
<div class="t" style="font-size:7.3px;line-height:8.76px;color:#7c8098;top:363.82px;-webkit-text-stroke:0.3px currentColor;left:785.6944444444445px;width:200px;text-align:center;">Pending</div>
<div class="t" style="font-size:7.3px;line-height:8.76px;color:#7c8098;top:363.82px;-webkit-text-stroke:0.3px currentColor;left:835.6388888888889px;width:200px;text-align:center;">Pending</div>
<div class="t" style="font-size:7.3px;line-height:8.76px;color:#7c8098;top:363.82px;-webkit-text-stroke:0.3px currentColor;left:885.5833333333333px;width:200px;text-align:center;">Pending</div>
<div class="t" style="font-size:7.3px;line-height:8.76px;color:#7c8098;top:363.82px;-webkit-text-stroke:0.3px currentColor;left:935.5277777777778px;width:200px;text-align:center;">Pending</div>
<div class="" style="left:611px;top:378.6px;width:449.5px;height:37.5px;background:#fff;"></div>
<div class="" style="left:611px;top:416.1px;width:449.5px;height:14.6px;background:#e6e7fb;border:1px solid #dcdcf0;"></div>
<div class="" style="left:611px;top:416.1px;width:150px;height:14.6px;background:#b0b0fb;"></div>
<div class="t" style="font-size:9.8px;line-height:11.76px;color:#343a66;top:380.02px;-webkit-text-stroke:0.2px currentColor;left:612px;">BAG CH4</div>
<div class="t" style="font-size:6.6px;line-height:7.92px;color:#222;top:381.04px;font-weight:bold;right:141.5px;">ppm</div>
<div class="t" style="font-size:7.2px;line-height:8.64px;color:#1c1c50;top:420.08px;font-weight:bold;left:535.9722222222222px;width:200px;text-align:center;">0.0</div>
<div class="t" style="font-size:7.2px;line-height:8.64px;color:#1c1c50;top:420.08px;font-weight:bold;left:585.9166666666666px;width:200px;text-align:center;">0.5</div>
<div class="t" style="font-size:7.2px;line-height:8.64px;color:#1c1c50;top:420.08px;font-weight:bold;left:635.8611111111111px;width:200px;text-align:center;">2187.9</div>
<div class="t" style="font-size:7.3px;line-height:8.76px;color:#7c8098;top:420.02px;-webkit-text-stroke:0.3px currentColor;left:685.8055555555555px;width:200px;text-align:center;">Pending</div>
<div class="t" style="font-size:7.3px;line-height:8.76px;color:#7c8098;top:420.02px;-webkit-text-stroke:0.3px currentColor;left:735.75px;width:200px;text-align:center;">Pending</div>
<div class="t" style="font-size:7.3px;line-height:8.76px;color:#7c8098;top:420.02px;-webkit-text-stroke:0.3px currentColor;left:785.6944444444445px;width:200px;text-align:center;">Pending</div>
<div class="t" style="font-size:7.3px;line-height:8.76px;color:#7c8098;top:420.02px;-webkit-text-stroke:0.3px currentColor;left:835.6388888888889px;width:200px;text-align:center;">Pending</div>
<div class="t" style="font-size:7.3px;line-height:8.76px;color:#7c8098;top:420.02px;-webkit-text-stroke:0.3px currentColor;left:885.5833333333333px;width:200px;text-align:center;">Pending</div>
<div class="t" style="font-size:7.3px;line-height:8.76px;color:#7c8098;top:420.02px;-webkit-text-stroke:0.3px currentColor;left:935.5277777777778px;width:200px;text-align:center;">Pending</div>
<div class="" style="left:611px;top:434.8px;width:449.5px;height:37.5px;background:#fff;"></div>
<div class="" style="left:611px;top:472.3px;width:449.5px;height:14.6px;background:#e6e7fb;border:1px solid #dcdcf0;"></div>
<div class="" style="left:611px;top:472.3px;width:150px;height:14.6px;background:#b0b0fb;"></div>
<div class="t" style="font-size:9.8px;line-height:11.76px;color:#343a66;top:436.22px;-webkit-text-stroke:0.2px currentColor;left:612px;">BAG NOX</div>
<div class="t" style="font-size:6.6px;line-height:7.92px;color:#222;top:437.24px;font-weight:bold;right:141.5px;">ppm</div>
<div class="t" style="font-size:7.2px;line-height:8.64px;color:#1c1c50;top:476.28px;font-weight:bold;left:535.9722222222222px;width:200px;text-align:center;">0.0</div>
<div class="t" style="font-size:7.2px;line-height:8.64px;color:#1c1c50;top:476.28px;font-weight:bold;left:585.9166666666666px;width:200px;text-align:center;">0.4</div>
<div class="t" style="font-size:7.2px;line-height:8.64px;color:#1c1c50;top:476.28px;font-weight:bold;left:635.8611111111111px;width:200px;text-align:center;">2203.8</div>
<div class="t" style="font-size:7.3px;line-height:8.76px;color:#7c8098;top:476.22px;-webkit-text-stroke:0.3px currentColor;left:685.8055555555555px;width:200px;text-align:center;">Pending</div>
<div class="t" style="font-size:7.3px;line-height:8.76px;color:#7c8098;top:476.22px;-webkit-text-stroke:0.3px currentColor;left:735.75px;width:200px;text-align:center;">Pending</div>
<div class="t" style="font-size:7.3px;line-height:8.76px;color:#7c8098;top:476.22px;-webkit-text-stroke:0.3px currentColor;left:785.6944444444445px;width:200px;text-align:center;">Pending</div>
<div class="t" style="font-size:7.3px;line-height:8.76px;color:#7c8098;top:476.22px;-webkit-text-stroke:0.3px currentColor;left:835.6388888888889px;width:200px;text-align:center;">Pending</div>
<div class="t" style="font-size:7.3px;line-height:8.76px;color:#7c8098;top:476.22px;-webkit-text-stroke:0.3px currentColor;left:885.5833333333333px;width:200px;text-align:center;">Pending</div>
<div class="t" style="font-size:7.3px;line-height:8.76px;color:#7c8098;top:476.22px;-webkit-text-stroke:0.3px currentColor;left:935.5277777777778px;width:200px;text-align:center;">Pending</div>
<svg style="left:0;top:0" width="1200" height="800"><polyline points="625.2,222.0 625.5,243.0 626.3,245.4 660.5,245.5" fill="none" stroke="#f7cd6e" stroke-width="1.6" stroke-linejoin="round" /><polyline points="613.2,289.0 614.7,300.2 617.7,279.2 620.0,295.7 623.7,280.0 625.2,288.2 630.5,280.0 633.5,292.0 635.7,298.0 638.7,280.0 641.0,296.5 644.7,278.5 648.5,280.0 653.0,296.5 656.0,275.5 659.7,286.0 661.2,272.5" fill="none" stroke="#f8d27c" stroke-width="1.7" stroke-linejoin="round" /><polyline points="625.2,334.4 625.5,355.4 626.3,357.8 660.5,357.9" fill="none" stroke="#f7cd6e" stroke-width="1.6" stroke-linejoin="round" /><polyline points="625.2,390.6 625.5,411.6 626.3,414.0 660.5,414.1" fill="none" stroke="#f7cd6e" stroke-width="1.6" stroke-linejoin="round" /><polyline points="625.2,446.8 625.5,467.8 626.3,470.2 660.5,470.3" fill="none" stroke="#f7cd6e" stroke-width="1.6" stroke-linejoin="round" /></svg>
<div class="t" style="font-size:10px;line-height:12.00px;color:#2b3380;top:187.00px;-webkit-text-stroke:0.2px currentColor;left:1074px;">Running</div>
<div class="t" style="font-size:10px;line-height:12.00px;color:#2b3380;top:209.50px;-webkit-text-stroke:0.2px currentColor;left:1074px;">Sample pump running</div>
<div class="t" style="font-size:10px;line-height:12.00px;color:#2b3380;top:230.20px;-webkit-text-stroke:0.2px currentColor;left:1074px;">CFV flow rate</div>
<div class="t" style="font-size:10px;line-height:12.00px;color:#2b3380;top:272.00px;-webkit-text-stroke:0.2px currentColor;left:1074px;">SAO flow rate</div>
<div style="left:1067.5px;top:159px;width:124px;height:362px;overflow:hidden;background:none">
<div class="t" style="left:106.5px;top:88px;font-size:12.5px;line-height:15px;color:#222">20.6</div>
<div class="t" style="left:106.5px;top:130.5px;font-size:12.5px;line-height:15px;color:#222">18.6</div>
</div>
<div class="" style="left:1069px;top:204px;width:123px;height:1px;background:#e6e6e6;"></div>
<div class="" style="left:1069px;top:225.5px;width:123px;height:1px;background:#e6e6e6;"></div>
<div class="" style="left:1069px;top:267px;width:123px;height:1px;background:#e6e6e6;"></div>
<div class="" style="left:1069px;top:308px;width:123px;height:1px;background:#e6e6e6;"></div>
<div class="" style="left:1069px;top:373px;width:123px;height:1px;background:#e6e6e6;"></div>
<div class="" style="left:1069px;top:439px;width:123px;height:1px;background:#e6e6e6;"></div>
<div class="" style="left:1069px;top:503.5px;width:123px;height:1px;background:#e6e6e6;"></div>
<div class="t" style="font-size:9.6px;line-height:11.52px;color:#2b3380;top:314.24px;-webkit-text-stroke:0.2px currentColor;left:1074px;">STD</div>
<div class="" style="left:1074px;top:329px;width:118px;height:3px;background:#666a70;"></div>
<div class="" style="left:1089.0px;top:331px;width:3px;height:30px;background:linear-gradient(90deg,#8a8a8a,#d8d8d8,#8a8a8a);"></div>
<div class="t" style="font-size:5px;line-height:6.00px;color:#555;top:334.80px;-webkit-text-stroke:0.3px currentColor;left:1093.0px;">1</div>
<div class="" style="left:1122.8px;top:331px;width:3px;height:30px;background:linear-gradient(90deg,#8a8a8a,#d8d8d8,#8a8a8a);"></div>
<div class="t" style="font-size:5px;line-height:6.00px;color:#555;top:334.80px;-webkit-text-stroke:0.3px currentColor;left:1126.8px;">2</div>
<div class="" style="left:1156.6px;top:331px;width:3px;height:30px;background:linear-gradient(90deg,#8a8a8a,#d8d8d8,#8a8a8a);"></div>
<div class="t" style="font-size:5px;line-height:6.00px;color:#555;top:334.80px;-webkit-text-stroke:0.3px currentColor;left:1160.6px;">3</div>
<div style="left:1067.5px;top:360px;width:124px;height:12px;overflow:hidden">
<div class="t" style="left:-7.0px;width:60px;text-align:center;top:2px;-webkit-text-stroke:0.2px currentColor;font-size:7.3px;line-height:8px;color:#8a8a8a;">Unused</div>
<div class="t" style="left:26.799999999999955px;width:60px;text-align:center;top:2px;-webkit-text-stroke:0.2px currentColor;font-size:7.3px;line-height:8px;color:#8a8a8a;">Unused</div>
<div class="t" style="left:60.59999999999991px;width:60px;text-align:center;top:2px;-webkit-text-stroke:0.2px currentColor;font-size:7.3px;line-height:8px;color:#8a8a8a;">Unused</div>
<div class="t" style="left:94.40000000000009px;width:60px;text-align:center;top:2px;-webkit-text-stroke:0.2px currentColor;font-size:7.3px;line-height:8px;color:#8a8a8a;">Unused</div>
</div>
<div class="t" style="font-size:9.6px;line-height:11.52px;color:#2b3380;top:379.44px;-webkit-text-stroke:0.2px currentColor;left:1074px;">LEV</div>
<div class="" style="left:1074px;top:394.2px;width:118px;height:3px;background:#666a70;"></div>
<div class="" style="left:1089.0px;top:396.2px;width:3px;height:30px;background:linear-gradient(90deg,#8a8a8a,#d8d8d8,#8a8a8a);"></div>
<div class="t" style="font-size:5px;line-height:6.00px;color:#555;top:400.00px;-webkit-text-stroke:0.3px currentColor;left:1093.0px;">1</div>
<div class="" style="left:1122.8px;top:396.2px;width:3px;height:30px;background:linear-gradient(90deg,#8a8a8a,#d8d8d8,#8a8a8a);"></div>
<div class="t" style="font-size:5px;line-height:6.00px;color:#555;top:400.00px;-webkit-text-stroke:0.3px currentColor;left:1126.8px;">2</div>
<div class="" style="left:1156.6px;top:396.2px;width:3px;height:30px;background:linear-gradient(90deg,#8a8a8a,#d8d8d8,#8a8a8a);"></div>
<div class="t" style="font-size:5px;line-height:6.00px;color:#555;top:400.00px;-webkit-text-stroke:0.3px currentColor;left:1160.6px;">3</div>
<div style="left:1067.5px;top:425.2px;width:124px;height:12px;overflow:hidden">
<div class="t" style="left:-7.0px;width:60px;text-align:center;top:2px;-webkit-text-stroke:0.2px currentColor;font-size:7.3px;line-height:8px;color:#8a8a8a;">Unused</div>
<div class="t" style="left:26.799999999999955px;width:60px;text-align:center;top:2px;-webkit-text-stroke:0.2px currentColor;font-size:7.3px;line-height:8px;color:#8a8a8a;">Unused</div>
<div class="t" style="left:60.59999999999991px;width:60px;text-align:center;top:2px;-webkit-text-stroke:0.2px currentColor;font-size:7.3px;line-height:8px;color:#8a8a8a;">Unused</div>
<div class="t" style="left:94.40000000000009px;width:60px;text-align:center;top:2px;-webkit-text-stroke:0.2px currentColor;font-size:7.3px;line-height:8px;color:#8a8a8a;">Unused</div>
</div>
<div class="t" style="font-size:9.6px;line-height:11.52px;color:#2b3380;top:444.74px;-webkit-text-stroke:0.2px currentColor;left:1074px;">DIESEL</div>
<div class="" style="left:1074px;top:459.5px;width:118px;height:3px;background:#666a70;"></div>
<div class="" style="left:1089.0px;top:461.5px;width:3px;height:30px;background:linear-gradient(90deg,#8a8a8a,#d8d8d8,#8a8a8a);"></div>
<div class="t" style="font-size:5px;line-height:6.00px;color:#555;top:465.30px;-webkit-text-stroke:0.3px currentColor;left:1093.0px;">1</div>
<div class="" style="left:1122.8px;top:461.5px;width:3px;height:30px;background:linear-gradient(90deg,#8a8a8a,#d8d8d8,#8a8a8a);"></div>
<div class="t" style="font-size:5px;line-height:6.00px;color:#555;top:465.30px;-webkit-text-stroke:0.3px currentColor;left:1126.8px;">2</div>
<div class="" style="left:1156.6px;top:461.5px;width:3px;height:30px;background:linear-gradient(90deg,#8a8a8a,#d8d8d8,#8a8a8a);"></div>
<div class="t" style="font-size:5px;line-height:6.00px;color:#555;top:465.30px;-webkit-text-stroke:0.3px currentColor;left:1160.6px;">3</div>
<div style="left:1067.5px;top:490.5px;width:124px;height:12px;overflow:hidden">
<div class="t" style="left:-7.0px;width:60px;text-align:center;top:2px;-webkit-text-stroke:0.2px currentColor;font-size:7.3px;line-height:8px;color:#222;font-weight:bold;">Read Bag</div>
<div class="t" style="left:26.799999999999955px;width:60px;text-align:center;top:2px;-webkit-text-stroke:0.2px currentColor;font-size:7.3px;line-height:8px;color:#222;font-weight:bold;">Fill</div>
<div class="t" style="left:60.59999999999991px;width:60px;text-align:center;top:2px;-webkit-text-stroke:0.2px currentColor;font-size:7.3px;line-height:8px;color:#222;font-weight:bold;">Standby</div>
<div class="t" style="left:94.40000000000009px;width:60px;text-align:center;top:2px;-webkit-text-stroke:0.2px currentColor;font-size:7.3px;line-height:8px;color:#222;font-weight:bold;">Standby</div>
</div>
<div class="" style="left:1085px;top:472.5px;width:10px;height:18.5px;background:linear-gradient(90deg,#e8b800,#ffe24a,#e8b800);border-radius:4px;border:0.5px solid #c8a000;"></div>
<div class="" style="left:1114.5px;top:471px;width:20.5px;height:21.5px;background:radial-gradient(circle at 40% 40%,#e6f6f0,#b4dcd0);border-radius:7px;border:1px solid #a8c8c0;"></div>
<div class="" style="left:1067.5px;top:504px;width:124.5px;height:17.5px;background:#f6f6f6;"></div>
<div class="" style="left:158px;top:523px;width:1034px;height:11.5px;background:#6b7588;"></div>
<div class="" style="left:802px;top:524.5px;width:390px;height:8.5px;background:#7f899a;"></div>
<div class="" style="left:158px;top:533.5px;width:1034px;height:23.5px;background:#f8f8f8;"></div>
<svg style="left:164.0px;top:540.3px" width="10" height="11"><rect x="0.8" y="0.8" width="8.4" height="9.4" rx="2" fill="#eef5ff" stroke="#3585e6" stroke-width="1.7"/><path d="M3 3 h3.2 v3.2 h-3.2 z" fill="#3585e6"/><path d="M5.5 6 l2.2 2.4" stroke="#3585e6" stroke-width="1.4"/></svg>
<div class="t" style="font-size:7.3px;line-height:8.76px;color:#222;top:542.42px;-webkit-text-stroke:0.3px currentColor;left:177px;">ECE1504 MT</div>
<div class="t" style="font-size:7.5px;line-height:9.00px;color:#111;top:542.30px;-webkit-text-stroke:0.3px currentColor;left:130.3px;width:200px;text-align:center;">&#9662;</div>
<svg style="left:241.5px;top:540.5px" width="11" height="10"><path d="M1 9.5 v-5 l1.5 -3.5 h6 l1.5 3.5 v5 h-2 v-1.5 h-5 v1.5 z" fill="#1f5fd2"/><rect x="3" y="2.3" width="5" height="1.8" fill="#9cc0f2"/></svg>
<div class="t" style="font-size:7.5px;line-height:9.00px;color:#222;top:542.30px;-webkit-text-stroke:0.3px currentColor;left:255px;">RT04 WLTC Diesel bag conti PM PN Hold</div>
<div class="t" style="font-size:7.5px;line-height:9.00px;color:#111;top:542.30px;-webkit-text-stroke:0.3px currentColor;left:304px;width:200px;text-align:center;">&#9662;</div>
<svg style="left:1096px;top:540px" width="11" height="11"><circle cx="5.5" cy="3" r="2.4" fill="#4a9a18"/><path d="M1 10.5 q0 -5 4.5 -5 q4.5 5 4.5 5 z" fill="#4a9a18"/><path d="M7 6 l3.5 v4 h-3.5z" fill="#e8b820"/></svg>
<div class="t" style="font-size:7px;line-height:8.40px;color:#222;top:542.60px;-webkit-text-stroke:0.3px currentColor;left:1110px;">User</div>
<div class="t" style="font-size:7.5px;line-height:9.00px;color:#111;top:542.30px;-webkit-text-stroke:0.3px currentColor;left:1035.5px;width:200px;text-align:center;">&#9662;</div>
<svg style="left:1147px;top:540.5px" width="10" height="10"><rect x="0" y="0" width="10" height="10" rx="1.5" fill="#1c60d8"/><rect x="2" y="2" width="2.5" height="2.5" fill="#fff"/><rect x="5.5" y="2" width="2.5" height="2.5" fill="#fff"/><rect x="2" y="5.5" width="2.5" height="2.5" fill="#fff"/><rect x="5.5" y="5.5" width="2.5" height="2.5" fill="#fff"/></svg>
<div class="t" style="font-size:7px;line-height:8.40px;color:#222;top:542.60px;-webkit-text-stroke:0.3px currentColor;left:1160px;">Layout</div>
<div class="" style="left:158px;top:562px;width:340px;height:151px;background:#fff;"></div>
<div class="" style="left:158px;top:562px;width:340px;height:17.5px;background:linear-gradient(#e2e2e2,#eaeaea);"></div>
<svg style="left:160.5px;top:565.5px" width="11" height="10"><rect x="0.3" y="0.3" width="10.4" height="9" rx="1.8" fill="#2c6cd8"/><rect x="2" y="2" width="2.8" height="2.2" fill="#dbe8fb"/><rect x="6" y="2" width="2.8" height="2.2" fill="#dbe8fb"/><rect x="2" y="5.4" width="2.8" height="2.2" fill="#dbe8fb"/><rect x="6" y="5.4" width="2.8" height="2.2" fill="#dbe8fb"/></svg>
<div class="t" style="font-size:7.6px;line-height:9.12px;color:#222;top:566.84px;-webkit-text-stroke:0.3px currentColor;left:175px;">System Log</div>
<div class="t" style="font-size:5.5px;line-height:6.60px;color:#888;top:568.00px;-webkit-text-stroke:0.3px currentColor;left:366.5px;width:200px;text-align:center;">&#9662;</div>
<div class="t" style="font-size:6px;line-height:7.20px;color:#888;top:567.20px;-webkit-text-stroke:0.3px currentColor;left:378.5px;width:200px;text-align:center;">&#8211;</div>
<svg style="left:487px;top:567.5px" width="6" height="6"><rect x="0.5" y="0.5" width="5" height="5" fill="none" stroke="#888" stroke-width="0.9"/></svg>
<div class="" style="left:162px;top:579.5px;width:332px;height:14.5px;background:linear-gradient(#f2f7fc,#e6eef8);"></div>
<div class="t" style="font-size:7.7px;line-height:9.24px;color:#222;top:582.78px;-webkit-text-stroke:0.3px currentColor;left:162px;">Created</div>
<div class="t" style="font-size:7.7px;line-height:9.24px;color:#222;top:582.78px;-webkit-text-stroke:0.3px currentColor;left:256px;">Source</div>
<div class="t" style="font-size:7.7px;line-height:9.24px;color:#222;top:582.78px;-webkit-text-stroke:0.3px currentColor;left:351px;">Message</div>
<div class="" style="left:502px;top:562px;width:340.5px;height:151px;background:#fff;"></div>
<div class="" style="left:502px;top:562px;width:340.5px;height:17.5px;background:linear-gradient(#e2e2e2,#eaeaea);"></div>
<svg style="left:504.5px;top:565.5px" width="11" height="10"><path d="M1 0.5 h5.5 l3 2.5 v6.5 h-8.5 z" fill="#2c6cd8"/><path d="M2.6 4 h4 M2.6 6 h4" stroke="#dbe8fb" stroke-width="1"/><path d="M7.5 3.5 l3 1.800 l-3 1.800 z" fill="#5b9bf0"/></svg>
<div class="t" style="font-size:7.6px;line-height:9.12px;color:#222;top:566.84px;-webkit-text-stroke:0.3px currentColor;left:519px;">Device Alarms</div>
<div class="t" style="font-size:5.5px;line-height:6.60px;color:#888;top:568.00px;-webkit-text-stroke:0.3px currentColor;left:711.0px;width:200px;text-align:center;">&#9662;</div>
<div class="t" style="font-size:6px;line-height:7.20px;color:#888;top:567.20px;-webkit-text-stroke:0.3px currentColor;left:723.0px;width:200px;text-align:center;">&#8211;</div>
<svg style="left:831.5px;top:567.5px" width="6" height="6"><rect x="0.5" y="0.5" width="5" height="5" fill="none" stroke="#888" stroke-width="0.9"/></svg>
<div class="" style="left:506px;top:579.5px;width:332.5px;height:14.5px;background:linear-gradient(#f2f7fc,#e6eef8);"></div>
<div class="t" style="font-size:7.7px;line-height:9.24px;color:#222;top:582.78px;-webkit-text-stroke:0.3px currentColor;left:520px;">Name</div>
<div class="t" style="font-size:7.7px;line-height:9.24px;color:#222;top:582.78px;-webkit-text-stroke:0.3px currentColor;left:694px;">Created</div>
<div class="" style="left:847.5px;top:562px;width:344.5px;height:151px;background:#fff;"></div>
<div class="" style="left:847.5px;top:562px;width:344.5px;height:17.5px;background:linear-gradient(#e2e2e2,#eaeaea);"></div>
<svg style="left:850.0px;top:565.5px" width="11" height="10"><path d="M2.800 1.5 h-2 v6.5 h2 M6.800 1.5 h2 v6.5 h-2" fill="none" stroke="#3a78d8" stroke-width="1.5"/><rect x="2.5" y="3.6" width="4.6" height="2.300" fill="#3a78d8"/></svg>
<div class="t" style="font-size:7.6px;line-height:9.12px;color:#222;top:566.84px;-webkit-text-stroke:0.3px currentColor;left:864.5px;">Channel Alarms</div>
<div class="t" style="font-size:5.5px;line-height:6.60px;color:#888;top:568.00px;-webkit-text-stroke:0.3px currentColor;left:1060.5px;width:200px;text-align:center;">&#9662;</div>
<div class="t" style="font-size:6px;line-height:7.20px;color:#888;top:567.20px;-webkit-text-stroke:0.3px currentColor;left:1072.5px;width:200px;text-align:center;">&#8211;</div>
<svg style="left:1181px;top:567.5px" width="6" height="6"><rect x="0.5" y="0.5" width="5" height="5" fill="none" stroke="#888" stroke-width="0.9"/></svg>
<div class="" style="left:851.5px;top:579.5px;width:336.5px;height:14.5px;background:linear-gradient(#f2f7fc,#e6eef8);"></div>
<div class="t" style="font-size:7.7px;line-height:9.24px;color:#222;top:582.78px;-webkit-text-stroke:0.3px currentColor;left:864.5px;">Name</div>
<div class="t" style="font-size:7.7px;line-height:9.24px;color:#222;top:582.78px;-webkit-text-stroke:0.3px currentColor;left:976.5px;">Created</div>
<div class="t" style="font-size:7.7px;line-height:9.24px;color:#222;top:582.78px;-webkit-text-stroke:0.3px currentColor;left:1119.5px;">Limit</div>
<div style="left:158px;top:594px;width:329px;height:109px;overflow:hidden">
<div class="t" style="left:4px;top:3.20px;font-size:7.4px;line-height:9px;color:#111;-webkit-text-stroke:0.3px currentColor">6/15/2020 3:03:57 PM</div>
<div class="t" style="left:98px;top:3.20px;font-size:7.4px;line-height:9px;color:#111;-webkit-text-stroke:0.3px currentColor">Execution</div>
<div class="t" style="left:193px;top:3.20px;font-size:7.4px;line-height:9px;color:#111;-webkit-text-stroke:0.3px currentColor">Bag pair read stage 'ZeroCheck' started</div>
<div class="t" style="left:4px;top:15.70px;font-size:7.4px;line-height:9px;color:#111;-webkit-text-stroke:0.3px currentColor">6/15/2020 3:03:57 PM</div>
<div class="t" style="left:98px;top:15.70px;font-size:7.4px;line-height:9px;color:#111;-webkit-text-stroke:0.3px currentColor">Execution</div>
<div class="t" style="left:193px;top:15.70px;font-size:7.4px;line-height:9px;color:#111;-webkit-text-stroke:0.3px currentColor">Bag pair read stage changed to 'Span'</div>
<div class="t" style="left:4px;top:28.20px;font-size:7.4px;line-height:9px;color:#111;-webkit-text-stroke:0.3px currentColor">6/15/2020 3:03:41 PM</div>
<div class="t" style="left:98px;top:28.20px;font-size:7.4px;line-height:9px;color:#111;-webkit-text-stroke:0.3px currentColor">Execution</div>
<div class="t" style="left:193px;top:28.20px;font-size:7.4px;line-height:9px;color:#111;-webkit-text-stroke:0.3px currentColor">Bag pair read stage 'Span' started</div>
<div class="t" style="left:4px;top:40.70px;font-size:7.4px;line-height:9px;color:#111;-webkit-text-stroke:0.3px currentColor">6/15/2020 3:03:41 PM</div>
<div class="t" style="left:98px;top:40.70px;font-size:7.4px;line-height:9px;color:#111;-webkit-text-stroke:0.3px currentColor">Execution</div>
<div class="t" style="left:193px;top:40.70px;font-size:7.4px;line-height:9px;color:#111;-webkit-text-stroke:0.3px currentColor">Bag pair read stage changed to 'Zero'</div>
<div class="t" style="left:4px;top:53.20px;font-size:7.4px;line-height:9px;color:#111;-webkit-text-stroke:0.3px currentColor">6/15/2020 3:03:25 PM</div>
<div class="t" style="left:98px;top:53.20px;font-size:7.4px;line-height:9px;color:#111;-webkit-text-stroke:0.3px currentColor">Execution</div>
<div class="t" style="left:193px;top:53.20px;font-size:7.4px;line-height:9px;color:#111;-webkit-text-stroke:0.3px currentColor">Bag pair read stage 'Zero' started</div>
<div class="t" style="left:4px;top:65.70px;font-size:7.4px;line-height:9px;color:#111;-webkit-text-stroke:0.3px currentColor">6/15/2020 3:03:25 PM</div>
<div class="t" style="left:98px;top:65.70px;font-size:7.4px;line-height:9px;color:#111;-webkit-text-stroke:0.3px currentColor">Execution</div>
<div class="t" style="left:193px;top:65.70px;font-size:7.4px;line-height:9px;color:#111;-webkit-text-stroke:0.3px currentColor">Bag pair read stage changed to 'Sniff'</div>
<div class="t" style="left:4px;top:78.20px;font-size:7.4px;line-height:9px;color:#111;-webkit-text-stroke:0.3px currentColor">6/15/2020 3:03:17 PM</div>
<div class="t" style="left:98px;top:78.20px;font-size:7.4px;line-height:9px;color:#111;-webkit-text-stroke:0.3px currentColor">Execution</div>
<div class="t" style="left:193px;top:78.20px;font-size:7.4px;line-height:9px;color:#111;-webkit-text-stroke:0.3px currentColor">Bag pair read stage 'Sniff' started</div>
<div class="t" style="left:4px;top:90.70px;font-size:7.4px;line-height:9px;color:#111;-webkit-text-stroke:0.3px currentColor">6/15/2020 3:03:13 PM</div>
<div class="t" style="left:98px;top:90.70px;font-size:7.4px;line-height:9px;color:#111;-webkit-text-stroke:0.3px currentColor">Execution</div>
<div class="t" style="left:193px;top:90.70px;font-size:7.4px;line-height:9px;color:#111;-webkit-text-stroke:0.3px currentColor">Starting: Reading bag pair 1</div>
<div class="t" style="left:4px;top:103.20px;font-size:7.4px;line-height:9px;color:#111;-webkit-text-stroke:0.3px currentColor">6/15/2020 3:03:13 PM</div>
<div class="t" style="left:98px;top:103.20px;font-size:7.4px;line-height:9px;color:#111;-webkit-text-stroke:0.3px currentColor">Execution</div>
<div class="t" style="left:193px;top:103.20px;font-size:7.4px;line-height:9px;color:#111;-webkit-text-stroke:0.3px currentColor">Outflow PM Sampler sampled data</div>
</div>
<div class="" style="left:487px;top:579.5px;width:10.5px;height:123.5px;background:#f7f7f7;"></div>
<div class="" style="left:158px;top:703px;width:340px;height:10px;background:#f0f0f0;"></div>
<div class="" style="left:158px;top:704px;width:133px;height:8px;background:#d2d2d2;"></div>
<div class="" style="left:-20px;top:717.5px;width:1240px;height:19.5px;background:#f1f1f1;border-top:2px solid #d9dbde;"></div>
<div class="" style="left:933px;top:721px;width:264px;height:15px;background:#fafafa;"></div>
<div class="" style="left:-20px;top:735.8px;width:1240px;height:2px;background:#7a7a7a;"></div>
<div class="" style="left:932.5px;top:721px;width:1px;height:14px;background:#c4c4c4;"></div>
<div class="" style="left:990.5px;top:721px;width:1px;height:14px;background:#c4c4c4;"></div>
<div class="" style="left:1125px;top:721px;width:1px;height:14px;background:#c4c4c4;"></div>
<svg style="left:935.5px;top:725.5px" width="8" height="8"><rect x="1.5" y="0.5" width="5" height="4.5" fill="#1c2c88"/><rect x="0.5" y="5.5" width="7" height="2" fill="#1c2c88"/></svg>
<div class="t" style="font-size:7.4px;line-height:8.88px;color:#444;top:725.86px;-webkit-text-stroke:0.1px currentColor;left:948px;">Standalone</div>
<div class="t" style="font-size:7.4px;line-height:8.88px;color:#444;top:725.86px;-webkit-text-stroke:0.1px currentColor;left:995px;">Workstation: Workstation1 (Test Cell)</div>
<div class="t" style="font-size:7.4px;line-height:8.88px;color:#444;top:725.86px;-webkit-text-stroke:0.1px currentColor;left:1129px;">User: Administrator</div>
</div></div></body></html>
